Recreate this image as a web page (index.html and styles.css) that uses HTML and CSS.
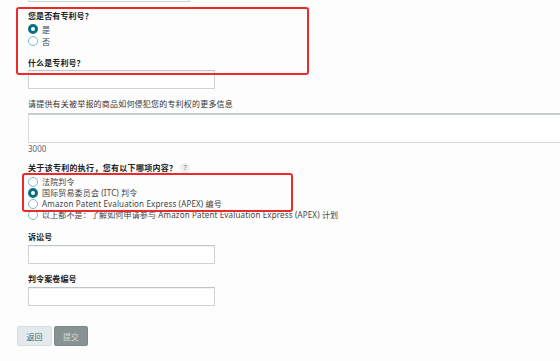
FILE: index.html
```html
<!DOCTYPE html>
<html>
<head>
  <meta charset="UTF-8" />
  <title>专利侵权举报</title>
  <link rel="stylesheet" href="styles.css">
</head>
<body>
  <div class="page">
    <form class="form">
      <input type="text" class="text-input short">

      <div class="label q1">您是否有专利号？</div>
      <div class="options wide">
        <div class="option"><span class="radio checked"></span>是</div>
        <div class="option"><span class="radio"></span>否</div>
      </div>

      <div class="label q2">什么是专利号？</div>
      <input type="text" class="text-input">

      <div class="label q3">请提供有关被举报的商品如何侵犯您的专利权的更多信息</div>
      <textarea class="text-area"></textarea>
      <div class="counter">3000</div>

      <div class="label q4">关于该专利的执行，您有以下哪项内容？ <span class="help">?</span></div>
      <div class="options">
        <div class="option"><span class="radio"></span>法院判令</div>
        <div class="option"><span class="radio checked"></span>国际贸易委员会 (ITC) 判令</div>
        <div class="option"><span class="radio"></span>Amazon Patent Evaluation Express (APEX) 编号</div>
        <div class="option"><span class="radio"></span>以上都不是：了解如何申请参与 Amazon Patent Evaluation Express (APEX) 计划</div>
      </div>

      <div class="label q5">诉讼号</div>
      <input type="text" class="text-input">

      <div class="label q6">判令案卷编号</div>
      <input type="text" class="text-input">
    </form>

    <div class="actions">
      <button class="btn back">返回</button>
      <button class="btn submit">提交</button>
    </div>
  </div>

  <!-- annotation boxes drawn over the form -->
  <div class="mark mark-one"></div>
  <div class="mark mark-two"></div>
</body>
</html>
```

FILE: styles.css
```css
body {
  margin: 0;
  background: #fdfdfd;
  font-family: "Noto Sans", "Noto Sans CJK SC", sans-serif;
  font-size: 8px;
  color: #333;
  overflow: hidden;
}
.page {
  padding-left: 17px;
  margin-top: -17px;
}
.form {
  display: flex;
  flex-direction: column;
  align-items: flex-start;
  padding-left: 11px;
}
.text-input {
  box-sizing: border-box;
  width: 187px;
  height: 19px;
  margin: 0;
  border: 1px solid #cfd3d3;
  border-top-color: #bfc4c4;
  background: #fff;
  box-shadow: inset 0 1px 1px rgba(0, 0, 0, 0.06);
}
.text-input.short {
  width: 162px;
}
.label {
  font-weight: bold;
  color: #222;
  line-height: 12px;
  letter-spacing: 0.1px;
}
.q1 { margin-top: 8px; }
.q2 { margin-top: 10px; margin-bottom: 1px; }
.q3 { margin-top: 9px; margin-bottom: 3px; font-weight: normal; color: #333; letter-spacing: 0.2px; }
.q4 { margin-top: 7px; display: flex; align-items: center; gap: 3px; letter-spacing: 0.3px; }
.q5 { margin-top: 11px; margin-bottom: 2px; }
.q6 { margin-top: 9px; margin-bottom: 2px; }
.help {
  display: inline-block;
  width: 10px;
  height: 10px;
  border-radius: 50%;
  background: #eef0f0;
  color: #777;
  font-size: 7px;
  font-weight: normal;
  line-height: 10px;
  text-align: center;
}
.options {
  margin-top: 2px;
}
.options.wide {
  margin-top: 1px;
}
.option {
  display: flex;
  align-items: center;
  gap: 4px;
  height: 11px;
  color: #444;
  white-space: nowrap;
  letter-spacing: 0.15px;
}
.options.wide .option {
  height: 12px;
}
.radio {
  box-sizing: border-box;
  width: 10px;
  height: 10px;
  border-radius: 50%;
  border: 1.5px solid #7cbccb;
  background: #fff;
}
.radio.checked {
  border: 3px solid #0b6f84;
  background: #fff;
}
.text-area {
  box-sizing: border-box;
  width: 560px;
  height: 30px;
  margin: 0;
  border: 1px solid #d6dada;
  border-top: 2px solid #c7cccc;
  background: #fff;
  resize: none;
}
.counter {
  color: #666;
  line-height: 12px;
}
.actions {
  display: flex;
  gap: 2px;
  margin-top: 20px;
}
.btn {
  height: 20px;
  padding: 0;
  border: 1px solid #d4dcdf;
  border-radius: 2px;
  font-family: inherit;
  font-size: 8px;
}
.btn.back {
  width: 35px;
  background: #e3e9ec;
  color: #3d6773;
}
.btn.submit {
  width: 34px;
  background: #879292;
  border-color: #7d8888;
  color: #d3dada;
}
.mark {
  position: absolute;
  box-sizing: border-box;
  border: 2px solid #ec2a2a;
  border-radius: 3px;
}
.mark-one {
  left: 16px;
  top: 7px;
  width: 293px;
  height: 68px;
}
.mark-two {
  left: 22px;
  top: 173px;
  width: 271px;
  height: 39px;
}
```
